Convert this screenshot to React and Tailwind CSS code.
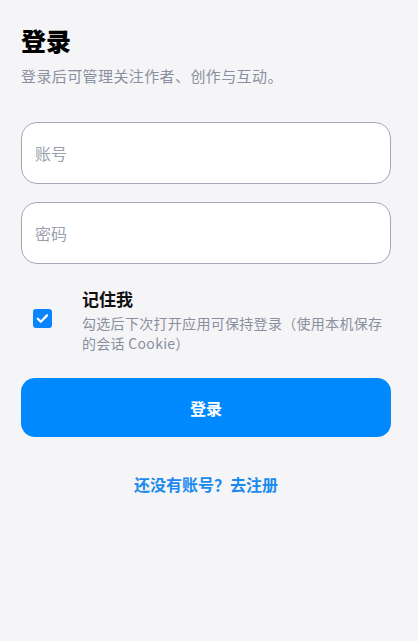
import React, { useState } from 'react';

const font = { fontFamily: '"Noto Sans CJK SC", "Noto Sans", sans-serif' };

export default function App() {
  const [remember, setRemember] = useState(true);

  return (
    <div className="min-h-screen bg-[#f5f5f7] pl-[21px] pr-[27px] pt-[24px]" style={font}>
      <h1 className="text-[25px] leading-[33px] font-black text-black">登录</h1>
      <p className="mt-[8px] text-[15px] leading-[22px] tracking-[0.4px] text-[#8a8fa0]">登录后可管理关注作者、创作与互动。</p>

      <input
        className="mt-[35px] block w-full h-[62px] rounded-[16px] border border-[#a3a8b6] bg-white px-[13px] text-[16px] text-gray-900 placeholder:text-[#9a9fae] outline-none"
        placeholder="账号"
      />
      <input
        type="password"
        className="mt-[18px] block w-full h-[62px] rounded-[16px] border border-[#a3a8b6] bg-white px-[13px] text-[16px] text-gray-900 placeholder:text-[#9a9fae] outline-none"
        placeholder="密码"
      />

      <div className="mt-[23px] flex items-center">
        <button
          onClick={() => setRemember(!remember)}
          className={`ml-[12px] -mt-[3px] w-[19px] h-[19px] shrink-0 rounded-[3px] flex items-center justify-center ${remember ? 'bg-[#0a84ff]' : 'bg-white border border-gray-400'}`}
        >
          {remember && (
            <svg viewBox="0 0 16 16" className="w-[15px] h-[15px]" fill="none" stroke="white" strokeWidth="2.4" strokeLinecap="round" strokeLinejoin="round">
              <path d="M3 8.3l3.2 3.2 6.6-6.8" />
            </svg>
          )}
        </button>
        <div className="ml-[30px]">
          <div className="text-[17px] leading-[24px] font-bold text-[#111]">记住我</div>
          <div className="mt-[2px] text-[14px] leading-[20px] tracking-[0.3px] text-[#8a8f9e]">勾选后下次打开应用可保持登录（使用本机保存的会话 Cookie）</div>
        </div>
      </div>

      <button className="mt-[25px] w-full h-[59px] rounded-[14px] bg-[#0088ff] text-white text-[16px] font-bold">登录</button>

      <div className="mt-[35px] text-center text-[16px] leading-[24px] font-bold text-[#1a8af0]">还没有账号？去注册</div>
    </div>
  );
}
